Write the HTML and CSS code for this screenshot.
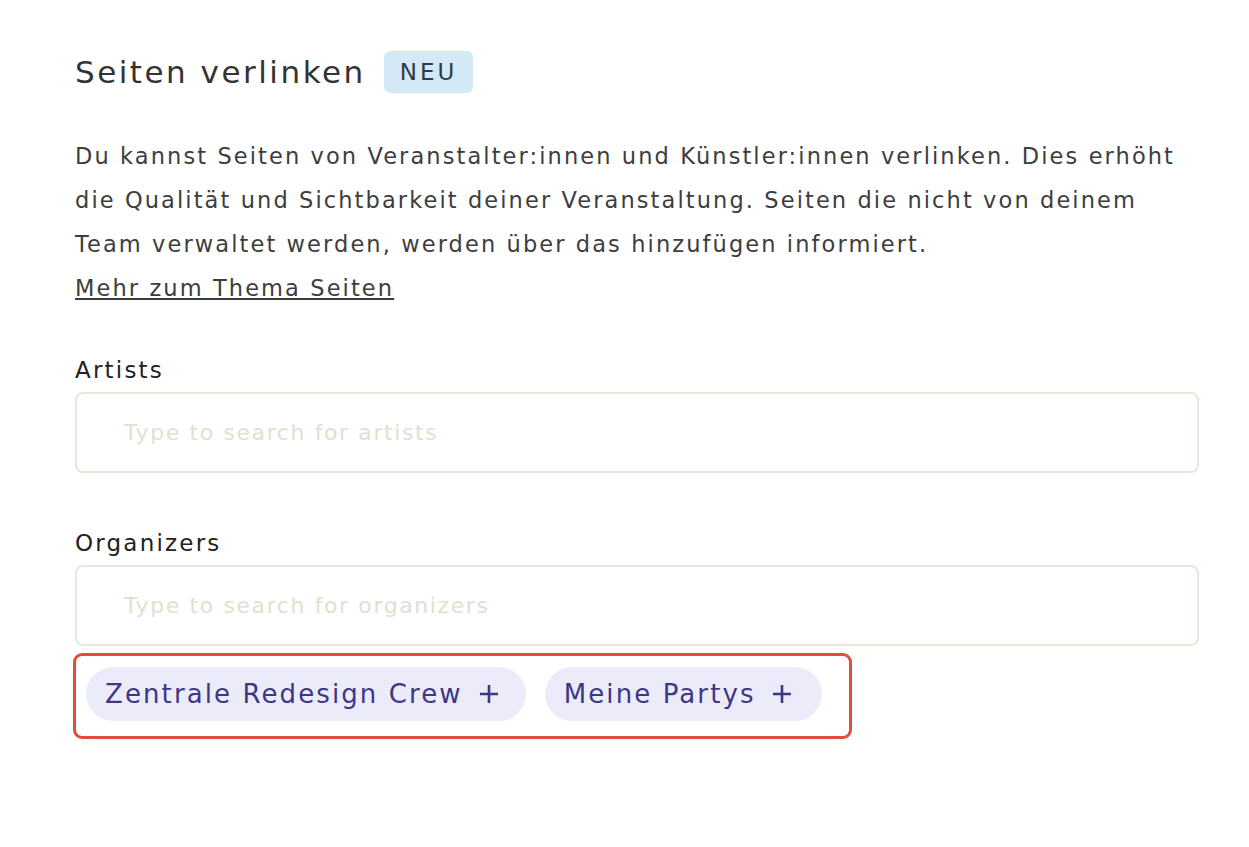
FILE: index.html
```html
<!DOCTYPE html>
<html lang="de">
<head>
    <meta charset="UTF-8">
    <title>Seiten verlinken</title>
    <meta name="viewport" content="width=device-width, initial-scale=1.0">
    <link rel="stylesheet" href="styles.css">
</head>
<body>

    <div class="container">
        <div class="title-row">
            <h2>Seiten verlinken</h2>
            <span class="badge">NEU</span>
        </div>

        <p class="intro">
            Du kannst Seiten von Veranstalter:innen und Künstler:innen verlinken. Dies erhöht<br>
            die Qualität und Sichtbarkeit deiner Veranstaltung. Seiten die nicht von deinem<br>
            Team verwaltet werden, werden über das hinzufügen informiert.<br>
            <a href="#">Mehr zum Thema Seiten</a>
        </p>

        <div class="form-group">
            <label for="artists">Artists</label>
            <input type="text" id="artists" placeholder="Type to search for artists">
        </div>

        <div class="form-group">
            <label for="organizers">Organizers</label>
            <input type="text" id="organizers" placeholder="Type to search for organizers">
        </div>

        <div class="suggestions">
            <button class="chip">Zentrale Redesign Crew
                <svg width="22" height="22" viewBox="0 0 22 22"><path d="M11 2v18M2 11h18" stroke="#3d3785" stroke-width="2.6" fill="none"/></svg>
            </button>
            <button class="chip">Meine Partys
                <svg width="22" height="22" viewBox="0 0 22 22"><path d="M11 2v18M2 11h18" stroke="#3d3785" stroke-width="2.6" fill="none"/></svg>
            </button>
        </div>
    </div>

</body>
</html>
```

FILE: styles.css
```css
* {
    margin: 0;
    padding: 0;
    box-sizing: border-box;
}

body {
    font-family: 'DejaVu Sans', 'Open Sans', sans-serif;
    background-color: #fff;
    color: #3a3a3a;
}

.container {
    width: 1124px;
    margin-left: 75px;
    padding-top: 51px;
}

.title-row {
    display: flex;
    align-items: center;
    gap: 18px;
}

h2 {
    font-size: 31px;
    font-weight: normal;
    letter-spacing: 2.5px;
    color: #333;
}

.badge {
    background-color: #d3eaf6;
    color: #2f3b4b;
    font-size: 23px;
    padding: 8px 16px;
    border-radius: 6px;
    letter-spacing: 3px;
}

.intro {
    margin-top: 41px;
    font-size: 22.5px;
    line-height: 44px;
    letter-spacing: 2.1px;
    color: #3d3d3d;
}

.intro a {
    color: #3d3d3d;
}

.form-group {
    margin-top: 47px;
}

.form-group + .form-group {
    margin-top: 57px;
}

label {
    display: block;
    font-size: 23px;
    letter-spacing: 2.2px;
    color: #222;
    margin-bottom: 9px;
}

input[type="text"] {
    width: 100%;
    height: 81px;
    padding: 0 47px;
    border: 2px solid #ebe5dc;
    border-radius: 8px;
    font-family: inherit;
    font-size: 22px;
    letter-spacing: 1.6px;
    color: #333;
}

input::placeholder {
    color: #e6ddd1;
}

.suggestions {
    display: inline-flex;
    gap: 19px;
    margin-top: 7px;
    margin-left: -2px;
    padding: 11px 27px 15px 10px;
    border: 3px solid #e04e39;
    border-radius: 9px;
}

.chip {
    display: flex;
    align-items: center;
    gap: 15px;
    height: 54px;
    padding: 0 26px 0 19px;
    border: none;
    border-radius: 27px;
    background-color: #ecebfa;
    color: #3d3785;
    font-family: inherit;
    font-size: 26px;
    letter-spacing: 2.1px;
    cursor: pointer;
}

.chip + .chip {
    padding-right: 29px;
}
```
